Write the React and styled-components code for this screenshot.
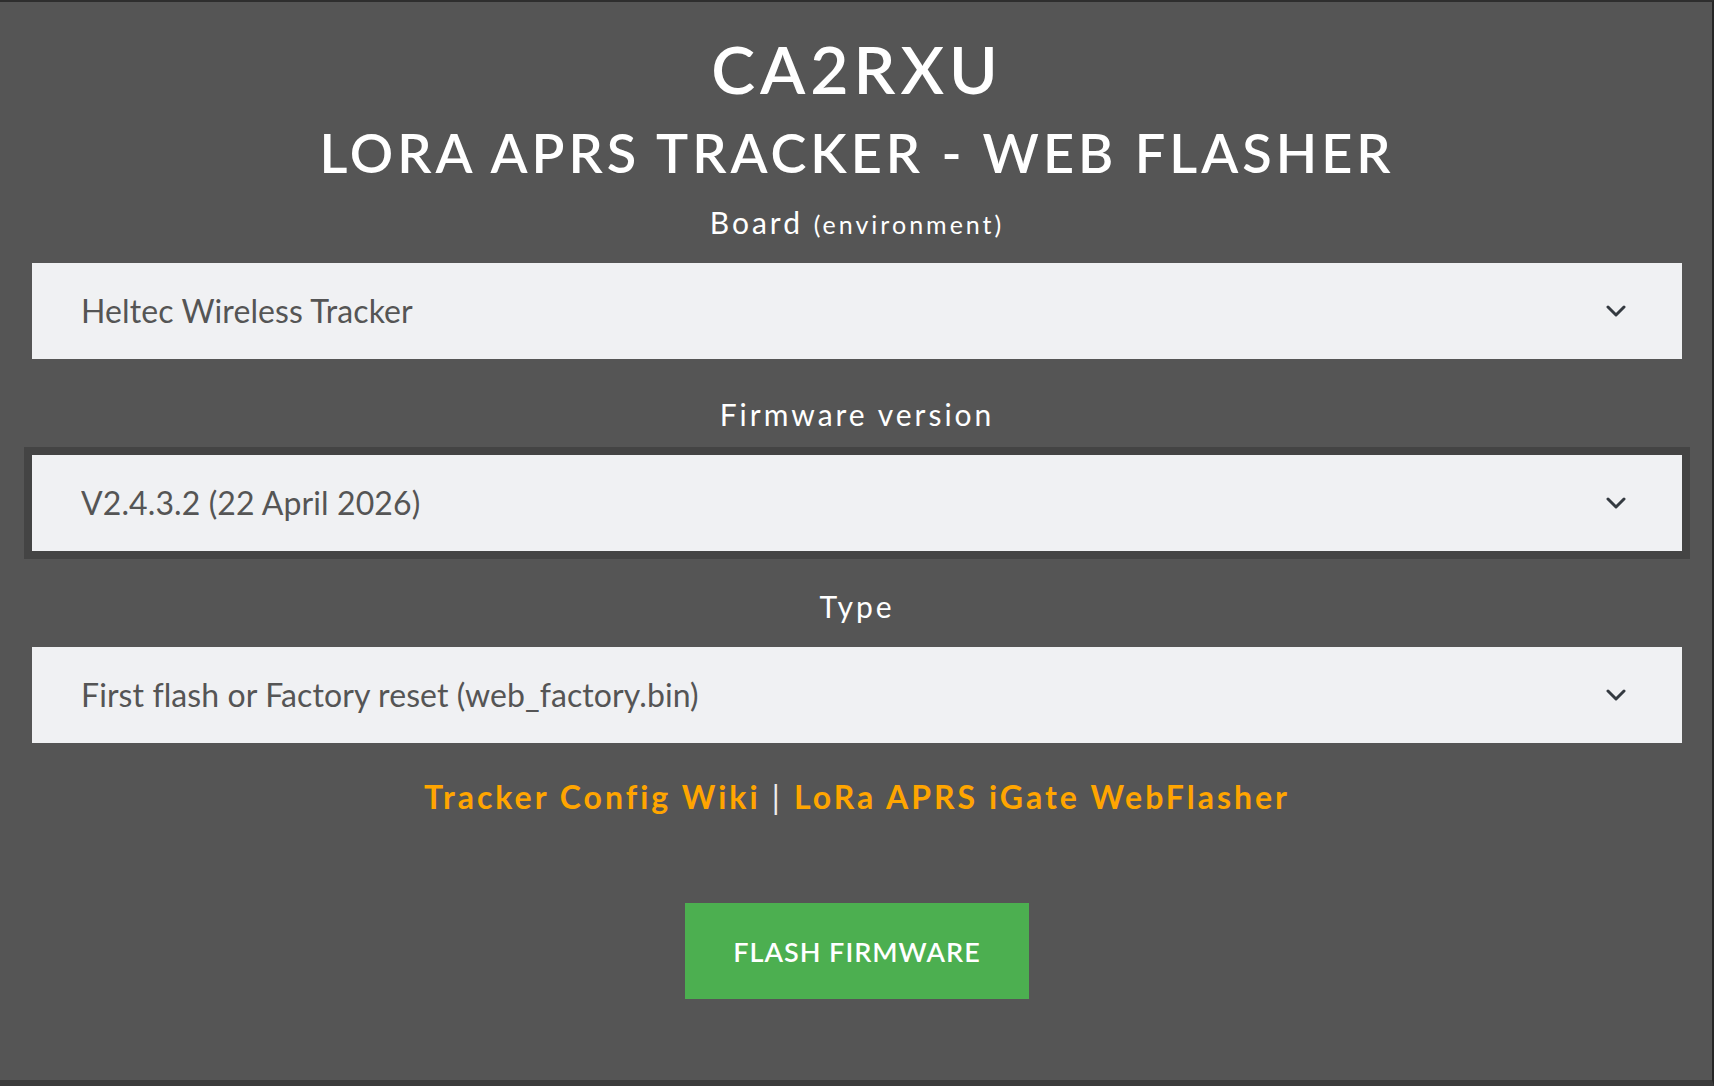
import React, { useState } from "react";
import styled, { createGlobalStyle } from "styled-components";

const GlobalStyle = createGlobalStyle`
  html, body {
    margin: 0;
    padding: 0;
    background: #555555;
  }
  body {
    font-family: Lato, "Noto Sans", sans-serif;
  }
  * {
    box-sizing: border-box;
  }
`;

const Frame = styled.div`
  height: 1086px;
  background: #555555;
  border-top: 2px solid #2e2e2e;
  border-right: 2px solid #262626;
  border-bottom: 6px solid #3b3b3b;
  padding: 0 30px 0 32px;
  display: flex;
  flex-direction: column;
  align-items: stretch;
  color: #ffffff;
`;

const Title = styled.h1`
  margin: 34px 0 0;
  font-size: 66px;
  line-height: 1;
  font-weight: 600;
  letter-spacing: 5px;
  text-align: center;
`;

const Subtitle = styled.h2`
  margin: 24px 0 0;
  font-size: 54px;
  line-height: 1;
  font-weight: 600;
  letter-spacing: 4px;
  text-align: center;
`;

const Field = styled.div`
  display: flex;
  flex-direction: column;
  margin-top: ${(p) => (p.first ? "27px" : "40px")};
`;

const Label = styled.label`
  font-size: 30px;
  line-height: 1;
  letter-spacing: 3px;
  text-align: center;
  margin-bottom: 26px;

  small {
    font-size: 25px;
    letter-spacing: 3px;
  }
`;

const SelectWrap = styled.div`
  position: relative;
  height: 96px;
  box-shadow: ${(p) => (p.focused ? "0 0 0 8px #444444" : "none")};
`;

const Select = styled.select`
  appearance: none;
  -webkit-appearance: none;
  width: 100%;
  height: 100%;
  border: none;
  border-radius: 0;
  outline: none;
  background: #f0f1f3;
  color: #555555;
  font-family: Lato, "Noto Sans", sans-serif;
  font-size: 32px;
  letter-spacing: 0.1px;
  padding: 0 80px 2px 49px;
  cursor: pointer;
`;

const Chevron = styled.svg`
  position: absolute;
  right: 56px;
  top: 50%;
  transform: translateY(-50%);
  pointer-events: none;
`;

const Links = styled.div`
  margin-top: 38px;
  font-size: 32px;
  line-height: 1;
  text-align: center;
  letter-spacing: 3px;
  color: #eeeeee;
`;

const Link = styled.a`
  color: #ffa500;
  font-weight: 700;
  text-decoration: none;
`;

const Actions = styled.div`
  display: flex;
  justify-content: center;
  margin-top: 90px;
`;

const FlashButton = styled.button`
  width: 344px;
  height: 96px;
  border: none;
  border-radius: 0;
  background: #4caf50;
  color: #ffffff;
  font-family: Lato, "Noto Sans", sans-serif;
  font-size: 27px;
  font-weight: 600;
  letter-spacing: 1px;
  text-transform: uppercase;
  cursor: pointer;
`;

const ChevronIcon = () => (
  <Chevron width="20" height="14" viewBox="0 0 20 14">
    <path
      d="M2 3 L10 11 L18 3"
      fill="none"
      stroke="#343a40"
      strokeWidth="3"
      strokeLinecap="round"
      strokeLinejoin="round"
    />
  </Chevron>
);

const SelectField = ({ label, small, first, focused, value, options, onChange }) => (
  <Field first={first}>
    <Label>
      {label} {small && <small>{small}</small>}
    </Label>
    <SelectWrap focused={focused}>
      <Select value={value} onChange={(e) => onChange(e.target.value)}>
        {options.map((o) => (
          <option key={o}>{o}</option>
        ))}
      </Select>
      <ChevronIcon />
    </SelectWrap>
  </Field>
);

const App = () => {
  const [board, setBoard] = useState("Heltec Wireless Tracker");
  const [version, setVersion] = useState("V2.4.3.2 (22 April 2026)");
  const [type, setType] = useState("First flash or Factory reset (web_factory.bin)");

  return (
    <>
      <GlobalStyle />
      <Frame>
        <Title>CA2RXU</Title>
        <Subtitle>LORA APRS TRACKER - WEB FLASHER</Subtitle>
        <SelectField
          first
          label="Board"
          small="(environment)"
          value={board}
          onChange={setBoard}
          options={["Heltec Wireless Tracker", "TTGO T-Beam v1.2", "Heltec WiFi LoRa 32 V3"]}
        />
        <SelectField
          focused
          label="Firmware version"
          value={version}
          onChange={setVersion}
          options={["V2.4.3.2 (22 April 2026)", "V2.4.3.1 (10 March 2026)"]}
        />
        <SelectField
          label="Type"
          value={type}
          onChange={setType}
          options={["First flash or Factory reset (web_factory.bin)", "Update (firmware.bin)"]}
        />
        <Links>
          <Link href="#">Tracker Config Wiki</Link> | <Link href="#">LoRa APRS iGate WebFlasher</Link>
        </Links>
        <Actions>
          <FlashButton>Flash Firmware</FlashButton>
        </Actions>
      </Frame>
    </>
  );
};

export default App;
